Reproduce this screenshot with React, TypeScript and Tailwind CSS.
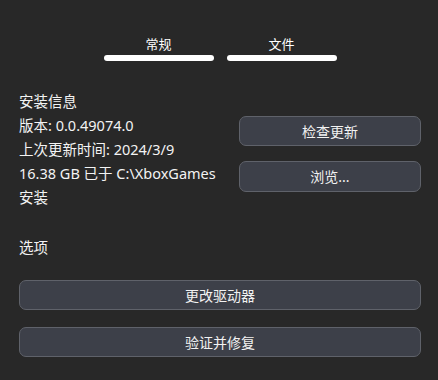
import React from "react";

const font = { fontFamily: '"Noto Sans", "Noto Sans CJK SC", sans-serif' };

function Btn({ label, className = "" }: { label: string; className?: string }) {
  return (
    <button
      className={`flex items-center justify-center rounded-[7px] border border-[#5f626a] bg-[#3d4049] text-[14px] text-[#f2f2f2] ${className}`}
    >
      {label}
    </button>
  );
}

export default function App() {
  return (
    <div
      className="h-[380px] w-[438px] overflow-hidden bg-[#282828] text-[#f3f3f3]"
      style={font}
    >
      <div className="flex justify-center gap-[13px] pt-[34px] pl-[2px]">
        {["常规", "文件"].map((t) => (
          <div key={t} className="flex w-[110px] flex-col items-center">
            <span className="text-[13px] leading-[20px] text-white">{t}</span>
            <div className="mt-[1px] h-[6px] w-full rounded-full bg-white" />
          </div>
        ))}
      </div>

      <div className="pl-[19px] pr-[17px]">
        <div className="mt-[28px] text-[14.5px] leading-[24px]">安装信息</div>
        <div className="flex items-start justify-between">
          <div className="w-[205px] text-[14.5px] leading-[24px]">
            <div>版本: 0.0.49074.0</div>
            <div>上次更新时间: 2024/3/9</div>
            <div>16.38 GB 已于 C:\XboxGames 安装</div>
          </div>
          <div className="mt-[3px] flex w-[182px] flex-col gap-[15px]">
            <Btn label="检查更新" className="h-[30px]" />
            <Btn label="浏览..." className="h-[31px]" />
          </div>
        </div>

        <div className="mt-[26px] text-[14.5px] leading-[24px]">选项</div>
        <div className="mt-[21px] flex flex-col gap-[17px]">
          <Btn label="更改驱动器" className="h-[30px] w-full" />
          <Btn label="验证并修复" className="h-[30px] w-full" />
        </div>
      </div>
    </div>
  );
}
